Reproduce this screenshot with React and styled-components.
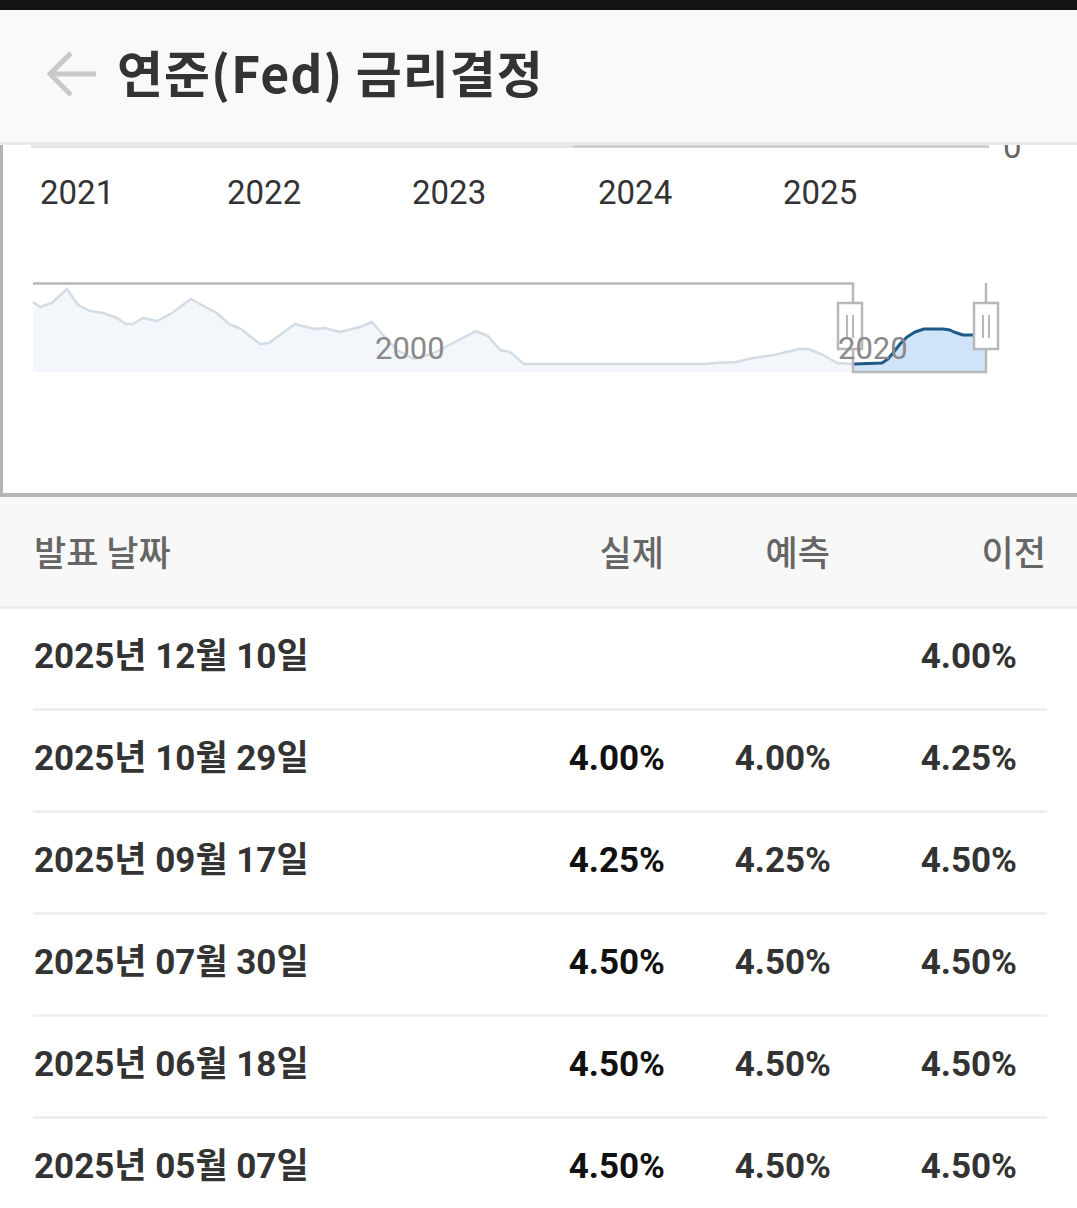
import React from "react";
import styled, { createGlobalStyle } from "styled-components";

const GlobalStyle = createGlobalStyle`
* {
  box-sizing: border-box;
  margin: 0;
  padding: 0;
}
body {
  background-color: #ffffff;
  font-family: "Noto Sans CJK KR", "Noto Sans", sans-serif;
}
`;

const Page = styled.div`
  width: 1077px;
  min-height: 1208px;
  background: #ffffff;
  overflow: hidden;
`;

const StatusStrip = styled.div`
  height: 10px;
  background: #141414;
`;

const Header = styled.header`
  height: 135px;
  display: flex;
  align-items: center;
  gap: 20px;
  padding-left: 47px;
  padding-bottom: 10px;
  background: #f9f9f9;
  border-bottom: 3px solid #ebebeb;
`;

const BackButton = styled.button`
  width: 50px;
  height: 50px;
  margin-top: 6px;
  border: none;
  background: transparent;
  display: flex;
  align-items: center;
  justify-content: center;
`;

const Title = styled.h1`
  font-size: 50px;
  font-weight: 700;
  color: #333333;
  letter-spacing: 1px;
`;

const ChartPanel = styled.section`
  height: 352px;
  border-left: 3px solid #b3b3b3;
  border-bottom: 4px solid #b7b7b7;
  background: #ffffff;
  overflow: hidden;
`;

const Table = styled.div`
  display: flex;
  flex-direction: column;
`;

const columns = `grid-template-columns: 1fr 164px 166px 216px;`;

const HeadRow = styled.div`
  display: grid;
  ${columns}
  align-items: center;
  height: 112px;
  padding: 0 31px 2px 34px;
  background: #f8f8f8;
  border-bottom: 3px solid #eeeeee;
`;

const HeadCell = styled.div`
  font-size: 35px;
  font-weight: 500;
  color: #666666;
  text-align: ${(p) => (p.$left ? "left" : "right")};
`;

const Row = styled.div`
  display: grid;
  ${columns}
  align-items: center;
  height: 102px;
  margin: 0 30px 0 33px;
  padding-left: 1px;
  padding-bottom: 4px;
  border-bottom: 3px solid #efefef;
`;

const DateCell = styled.div`
  font-family: Roboto, "Noto Sans CJK KR", sans-serif;
  font-size: 35px;
  line-height: 42px;
  font-weight: 700;
  color: #333333;
`;

const ValueCell = styled.div`
  font-family: Roboto, "Noto Sans CJK KR", sans-serif;
  font-size: 35px;
  line-height: 42px;
  font-weight: 700;
  text-align: right;
  color: ${(p) => (p.$strong ? "#111111" : "#333333")};
  padding-right: ${(p) => (p.$last ? "30px" : "0")};
`;

const rows = [
  { date: "2025년 12월 10일", actual: "", forecast: "", prev: "4.00%" },
  { date: "2025년 10월 29일", actual: "4.00%", forecast: "4.00%", prev: "4.25%" },
  { date: "2025년 09월 17일", actual: "4.25%", forecast: "4.25%", prev: "4.50%" },
  { date: "2025년 07월 30일", actual: "4.50%", forecast: "4.50%", prev: "4.50%" },
  { date: "2025년 06월 18일", actual: "4.50%", forecast: "4.50%", prev: "4.50%" },
  { date: "2025년 05월 07일", actual: "4.50%", forecast: "4.50%", prev: "4.50%" },
];

const years = [
  { label: "2021", x: 40 },
  { label: "2022", x: 227 },
  { label: "2023", x: 412 },
  { label: "2024", x: 598 },
  { label: "2025", x: 783 },
];

// navigator series, page coords
const history = [
  [33, 302], [40, 307], [52, 303], [67, 289], [78, 305], [90, 311], [103, 313],
  [117, 318], [126, 324], [133, 324], [143, 318], [157, 321], [172, 313],
  [191, 299], [207, 308], [217, 313], [229, 324], [241, 329], [260, 344],
  [269, 343], [295, 324], [314, 329], [324, 328], [340, 332], [360, 327],
  [372, 322], [383, 335], [397, 350], [414, 359], [434, 353], [476, 331],
  [488, 336], [500, 350], [510, 352], [524, 364], [704, 364], [715, 363],
  [736, 362], [753, 358], [774, 355], [799, 349], [809, 349], [823, 355],
  [837, 363], [853, 364],
];

const recent = [
  [854, 364], [882, 363], [888, 359], [893, 353], [900, 344], [907, 337],
  [915, 332], [924, 329], [943, 329], [950, 330], [954, 332], [963, 335], [974, 335],
];

const toLine = (pts) => pts.map((p, i) => `${i ? "L" : "M"}${p[0]} ${p[1]}`).join(" ");
const toArea = (pts) =>
  `${toLine(pts)} L${pts[pts.length - 1][0]} 372 L${pts[0][0]} 372 Z`;

function Handle({ x }) {
  return (
    <g>
      <rect x={x} y={303} width={24} height={46} fill="#ffffff" stroke="#b8b8b8" strokeWidth="2.5" />
      <line x1={x + 9} y1={315} x2={x + 9} y2={338} stroke="#b8b8b8" strokeWidth="2" />
      <line x1={x + 15} y1={315} x2={x + 15} y2={338} stroke="#b8b8b8" strokeWidth="2" />
    </g>
  );
}

function RateChart() {
  return (
    <svg width="1074" height="348" viewBox="3 145 1074 348" style={{ display: "block" }}>
      <line x1="31" y1="146.5" x2="573" y2="146.5" stroke="#e4e7ea" strokeWidth="3" />
      <line x1="573" y1="146.5" x2="989" y2="146.5" stroke="#cdd0d2" strokeWidth="3" />
      <text x="1003" y="158" fontFamily="Roboto, sans-serif" fontSize="33" fill="#666666">0</text>
      {years.map((y) => (
        <text key={y.label} x={y.x} y="204" fontFamily="Roboto, sans-serif" fontSize="33" fill="#333333">
          {y.label}
        </text>
      ))}

      <path d={toArea([...history, [974, 364]])} fill="#f3f7fb" />
      <path d={toLine(history)} fill="none" stroke="#d3dce3" strokeWidth="2.5" strokeLinejoin="round" />
      <path d={toArea(recent)} fill="#cfe3f9" />
      <rect x="974" y="335" width="12" height="37" fill="#cfe3f9" />
      <path d={toLine(recent)} fill="none" stroke="#1f5a87" strokeWidth="3" strokeLinejoin="round" />

      <path d="M33 283.5 H853 V372 H986 V283" fill="none" stroke="#b8b8b8" strokeWidth="2.5" />
      <Handle x={838} />
      <Handle x={974} />

      <text x="375" y="359" fontFamily="Roboto, sans-serif" fontSize="31" fill="#8a8a8a">2000</text>
      <text x="838" y="359" fontFamily="Roboto, sans-serif" fontSize="31" fill="#8a8a8a">2020</text>
    </svg>
  );
}

export default function App() {
  return (
    <Page>
      <GlobalStyle />
      <StatusStrip />
      <Header>
        <BackButton aria-label="뒤로">
          <svg width="50" height="48" viewBox="0 0 50 48">
            <path d="M24 3 L3 24 L24 45 M3 24 H49" fill="none" stroke="#c9c9c9" strokeWidth="5" />
          </svg>
        </BackButton>
        <Title>연준(Fed) 금리결정</Title>
      </Header>
      <ChartPanel>
        <RateChart />
      </ChartPanel>
      <Table>
        <HeadRow>
          <HeadCell $left>발표 날짜</HeadCell>
          <HeadCell>실제</HeadCell>
          <HeadCell>예측</HeadCell>
          <HeadCell>이전</HeadCell>
        </HeadRow>
        {rows.map((r) => (
          <Row key={r.date}>
            <DateCell>{r.date}</DateCell>
            <ValueCell $strong>{r.actual}</ValueCell>
            <ValueCell>{r.forecast}</ValueCell>
            <ValueCell $last>{r.prev}</ValueCell>
          </Row>
        ))}
      </Table>
    </Page>
  );
}
